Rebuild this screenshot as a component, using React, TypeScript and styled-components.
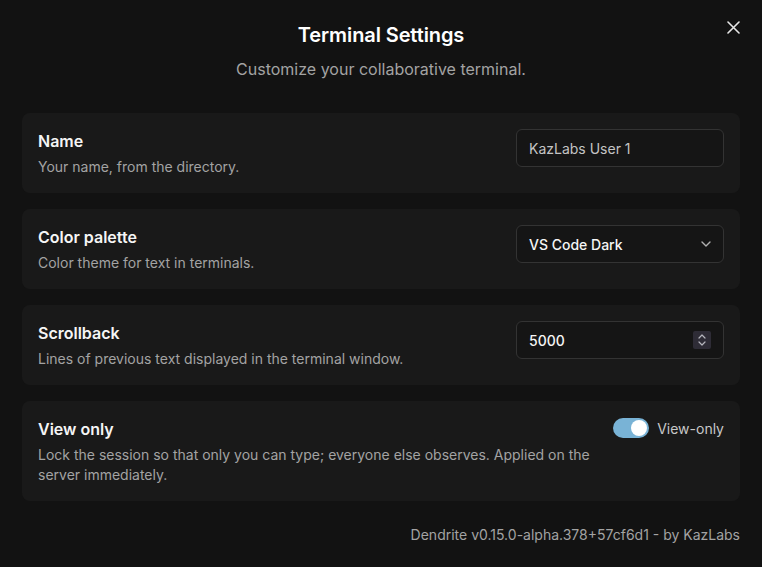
import { useState } from 'react'
import styled, { createGlobalStyle } from 'styled-components'

const GlobalStyle = createGlobalStyle`
  html, body {
    margin: 0;
    padding: 0;
    background: #121212;
  }
  body {
    font-family: Inter, "Noto Sans", sans-serif;
    color: #f2f2f2;
    -webkit-font-smoothing: antialiased;
  }
`

const Dialog = styled.div`
  position: relative;
  box-sizing: border-box;
  width: 762px;
  min-height: 567px;
  padding: 21px 22px 22px;
  background: #121212;
`

const CloseButton = styled.button`
  position: absolute;
  top: 17px;
  right: 19px;
  width: 20px;
  height: 20px;
  padding: 0;
  border: 0;
  background: transparent;
  color: #e6e6e6;
  display: flex;
  align-items: center;
  justify-content: center;
  cursor: pointer;
`

const Header = styled.header`
  display: flex;
  flex-direction: column;
  align-items: center;
  gap: 8px;
  margin-bottom: 32px;
`

const Title = styled.h2`
  margin: 0;
  font-size: 20px;
  line-height: 28px;
  font-weight: 600;
  color: #ffffff;
  letter-spacing: -0.1px;
`

const Subtitle = styled.p`
  margin: 0;
  font-size: 16px;
  line-height: 24px;
  color: #a3a3a3;
`

const Sections = styled.div`
  display: flex;
  flex-direction: column;
  gap: 16px;
`

const Section = styled.section`
  display: flex;
  align-items: flex-start;
  justify-content: space-between;
  gap: 20px;
  padding: 16px;
  border-radius: 8px;
  background: #191919;
`

const Info = styled.div`
  display: flex;
  flex-direction: column;
  gap: 4px;
  min-width: 0;
`

const Label = styled.div`
  font-size: 16px;
  line-height: 24px;
  font-weight: 600;
  color: #f5f5f5;
`

const Description = styled.div`
  font-size: 14px;
  line-height: 20px;
  color: #a3a3a3;
`

const Field = styled.div<{ $muted?: boolean }>`
  box-sizing: border-box;
  flex: 0 0 208px;
  height: 38px;
  display: flex;
  align-items: center;
  justify-content: space-between;
  padding: 0 12px;
  border: 1px solid #333333;
  border-radius: 6px;
  background: #151515;
  font-size: 14px;
  color: ${(p) => (p.$muted ? '#c4c4c4' : '#f5f5f5')};
  font-weight: ${(p) => (p.$muted ? 400 : 500)};
`

const Stepper = styled.span`
  width: 18px;
  height: 18px;
  border-radius: 2px;
  background: #2e2c36;
  display: flex;
  align-items: center;
  justify-content: center;
  color: #b5b5bd;
`

const ToggleRow = styled.label`
  flex: 0 0 auto;
  display: flex;
  align-items: center;
  gap: 8px;
  margin-top: 1px;
  font-size: 14px;
  color: #c8c8c8;
  cursor: pointer;
`

const Track = styled.span<{ $on: boolean }>`
  position: relative;
  width: 36px;
  height: 20px;
  border-radius: 10px;
  background: ${(p) => (p.$on ? '#79b3d6' : '#3a3a3a')};
  transition: background 0.15s;
`

const Knob = styled.span<{ $on: boolean }>`
  position: absolute;
  top: 2px;
  left: ${(p) => (p.$on ? '18px' : '2px')};
  width: 16px;
  height: 16px;
  border-radius: 50%;
  background: #ffffff;
  transition: left 0.15s;
`

const Footer = styled.footer`
  margin-top: 24px;
  text-align: right;
  font-size: 14px;
  line-height: 20px;
  color: #a3a3a3;
`

function CloseIcon() {
  return (
    <svg width="13" height="13" viewBox="0 0 13 13" fill="none">
      <path d="M1 1l11 11M12 1L1 12" stroke="currentColor" strokeWidth="1.6" strokeLinecap="round" />
    </svg>
  )
}

function ChevronDown() {
  return (
    <svg width="10" height="6" viewBox="0 0 10 6" fill="none">
      <path d="M1 1l4 4 4-4" stroke="#b0b0b0" strokeWidth="1.4" strokeLinecap="round" strokeLinejoin="round" />
    </svg>
  )
}

function StepperIcon() {
  return (
    <svg width="8" height="12" viewBox="0 0 8 12" fill="none">
      <path d="M1 4l3-3 3 3M1 8l3 3 3-3" stroke="currentColor" strokeWidth="1.2" strokeLinecap="round" strokeLinejoin="round" />
    </svg>
  )
}

export default function App() {
  const [viewOnly, setViewOnly] = useState(true)

  return (
    <>
      <GlobalStyle />
      <Dialog>
        <CloseButton aria-label="Close">
          <CloseIcon />
        </CloseButton>
        <Header>
          <Title>Terminal Settings</Title>
          <Subtitle>Customize your collaborative terminal.</Subtitle>
        </Header>
        <Sections>
          <Section>
            <Info>
              <Label>Name</Label>
              <Description>Your name, from the directory.</Description>
            </Info>
            <Field $muted>KazLabs User 1</Field>
          </Section>
          <Section>
            <Info>
              <Label>Color palette</Label>
              <Description>Color theme for text in terminals.</Description>
            </Info>
            <Field>
              VS Code Dark
              <ChevronDown />
            </Field>
          </Section>
          <Section>
            <Info>
              <Label>Scrollback</Label>
              <Description>Lines of previous text displayed in the terminal window.</Description>
            </Info>
            <Field>
              5000
              <Stepper>
                <StepperIcon />
              </Stepper>
            </Field>
          </Section>
          <Section>
            <Info>
              <Label>View only</Label>
              <Description>
                Lock the session so that only you can type; everyone else observes. Applied on the
                server immediately.
              </Description>
            </Info>
            <ToggleRow onClick={() => setViewOnly((v) => !v)}>
              <Track $on={viewOnly}>
                <Knob $on={viewOnly} />
              </Track>
              View-only
            </ToggleRow>
          </Section>
        </Sections>
        <Footer>Dendrite v0.15.0-alpha.378+57cf6d1 - by KazLabs</Footer>
      </Dialog>
    </>
  )
}
